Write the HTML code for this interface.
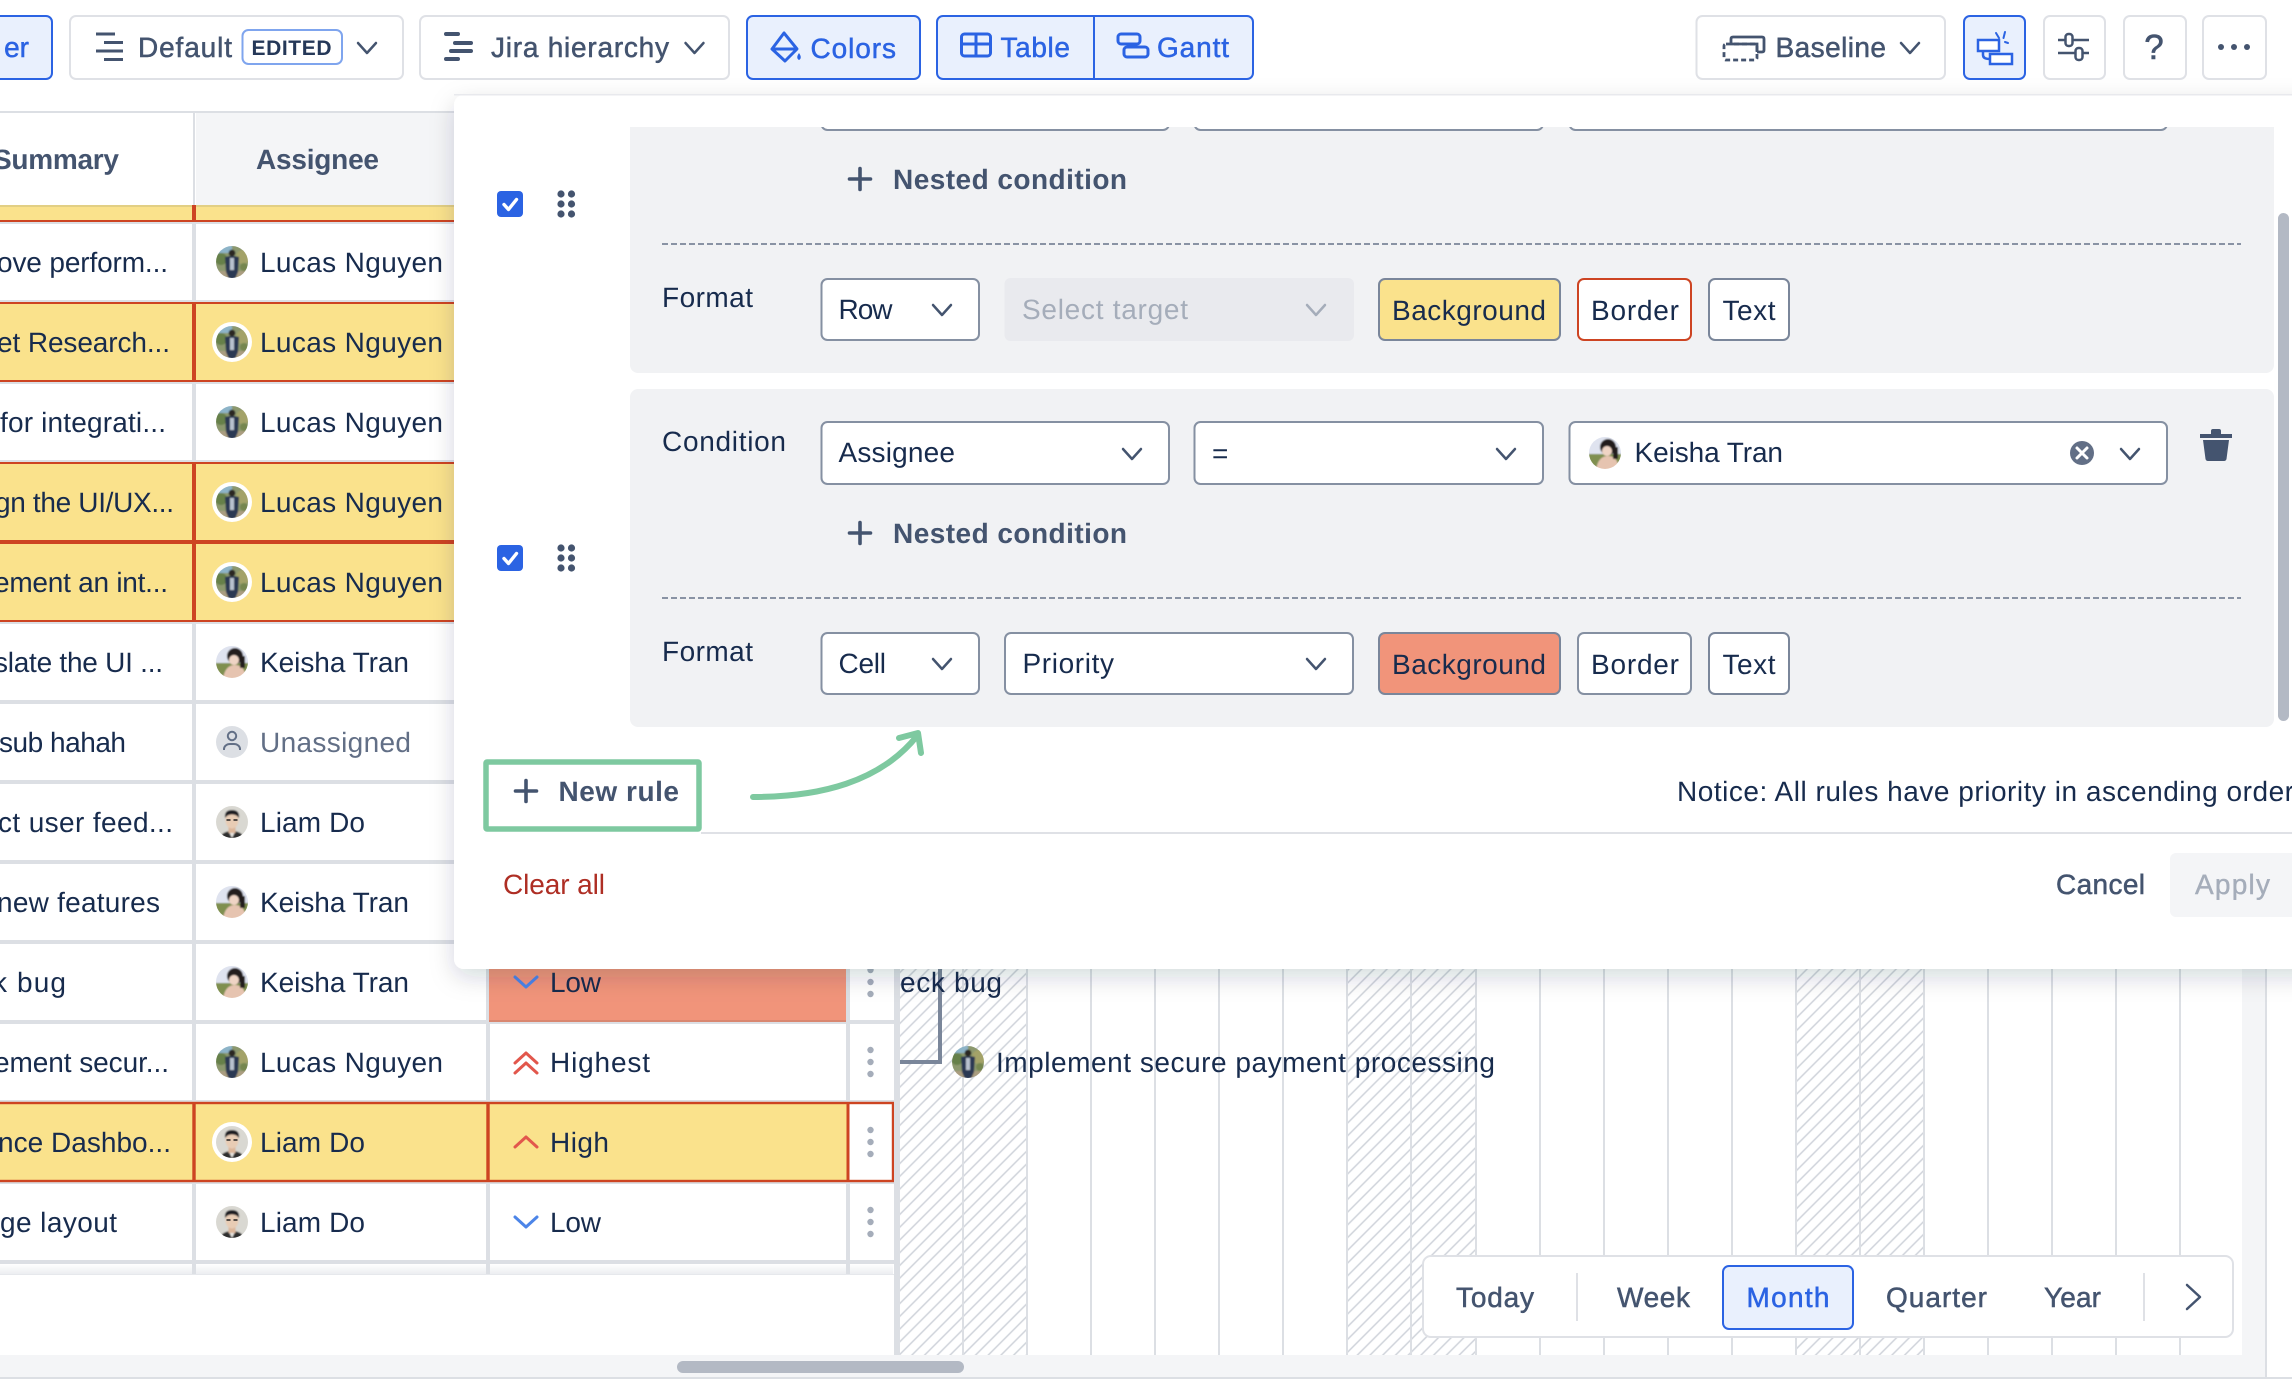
<!DOCTYPE html>
<html><head><meta charset="utf-8"><title>Gantt colors</title>
<style>
html,body{margin:0;padding:0;background:#fff;width:2292px;height:1379px;overflow:hidden}
svg{display:block;position:absolute;left:0;top:0}
text{font-family:"Liberation Sans",sans-serif;font-size:28px;fill:#172b4d;text-rendering:geometricPrecision;white-space:pre}
.m{fill:#44546f;stroke:#44546f;stroke-width:.5}
.h{fill:#44546f;font-weight:700}
.b{fill:#2b63e3;stroke:#2b63e3;stroke-width:.5}
.btn{fill:#fff;stroke:#dfe1e6;stroke-width:2}
.act{fill:#e9f0fd;stroke:#2b63e3;stroke-width:2}
.inp{fill:#fff;stroke:#8590a2;stroke-width:2}
.chev{fill:none;stroke:#44546f;stroke-width:2.5;stroke-linecap:round;stroke-linejoin:round}
</style></head><body>
<svg width="2292" height="1379" viewBox="0 0 2292 1379" xmlns="http://www.w3.org/2000/svg">
<defs>
<pattern id="hatch" width="9" height="9" patternUnits="userSpaceOnUse" patternTransform="rotate(45)"><line x1="1" y1="0" x2="1" y2="9" stroke="#cfd3da" stroke-width="1.500"/></pattern>
<filter id="sh" x="-5%" y="-10%" width="110%" height="125%"><feDropShadow dx="0" dy="8" stdDeviation="12" flood-color="#091e42" flood-opacity=".17"/></filter>
<filter id="soft" x="-10%" y="-10%" width="120%" height="120%"><feGaussianBlur stdDeviation=".8"/></filter>
<linearGradient id="fade" x1="0" y1="0" x2="0" y2="1"><stop offset="0" stop-color="#fff"/><stop offset="1" stop-color="#eceef1"/></linearGradient>
<clipPath id="av"><circle r="16"/></clipPath>
<clipPath id="scroll"><rect x="454" y="127" width="1822" height="620"/></clipPath>
<g id="lucas"><g clip-path="url(#av)"><g filter="url(#soft)"><rect x="-17" y="-17" width="34" height="34" fill="#8c986e"/><rect x="-17" y="-17" width="17" height="8" fill="#8db4c8"/><circle cx="-11" cy="-3" r="6" fill="#66804a"/><circle cx="11" cy="-5" r="7" fill="#a3a268"/><circle cx="12" cy="5" r="4" fill="#74864f"/><rect x="-17" y="9" width="34" height="8" fill="#aa9d80"/><path d="M-7 -5 Q0 -7 7 -5 L6 10 L3 17 H-3 L-6 10Z" fill="#2a3852"/><rect x="-2" y="-4" width="4" height="12" fill="#b9c2cf"/><circle cy="-9" r="3.4" fill="#2b2622"/></g></g></g>
<g id="keisha"><g clip-path="url(#av)"><g filter="url(#soft)"><rect x="-17" y="-17" width="34" height="34" fill="#dfe3ef"/><rect x="-17" y="1" width="34" height="16" fill="#7f8f50"/><path d="M-9 17 Q-7 3 3 3 Q13 3 14 17Z" fill="#e6c4b0"/><circle cx="3" cy="-6" r="8" fill="#231d1f"/><ellipse cx="2" cy="-2" rx="5" ry="5" fill="#efd4c4"/><rect x="8" y="-6" width="5" height="12" fill="#231d1f"/></g></g></g>
<g id="liam"><g clip-path="url(#av)"><g filter="url(#soft)"><rect x="-17" y="-17" width="34" height="34" fill="#d9d8d2"/><path d="M-13 17 Q-10 9 0 9 Q10 9 13 17Z" fill="#2e2d2e"/><path d="M-3 10L0 16L3 10Z" fill="#e8e6e2"/><rect x="-3.500" y="5" width="7" height="6" fill="#dcb69a"/><ellipse cy="-2" rx="6.500" ry="8.500" fill="#e8ccb4"/><path d="M-7 -4 Q-8 -12 0 -12 Q8 -12 7 -4 Q4 -8 0 -7.500 Q-4 -8 -7 -4Z" fill="#1f1e20"/></g><path d="M-5.500 -2h4M1.500 -2h4" stroke="#222" stroke-width="1.500"/></g></g>
<g id="none"><circle r="16" fill="#dcdfe4"/><circle cy="-6" r="4.2" fill="none" stroke="#626f86" stroke-width="2"/><path d="M-8 8 v-1 a6 5 0 0 1 6 -5 h4 a6 5 0 0 1 6 5 v1" fill="none" stroke="#626f86" stroke-width="2"/></g>
<g id="ring"><circle r="20" fill="#fff"/></g>
<g id="hl"><rect x="0" y="0" width="454" height="80" fill="#fae28c"/><rect x="0" y="0" width="454" height="2" fill="#cd4422"/><rect x="0" y="78" width="454" height="2" fill="#cd4422"/><rect x="192" y="0" width="4" height="80" fill="#cd4422"/></g>
<g id="keb" fill="#a5adba"><circle cy="-12" r="3.2"/><circle r="3.2"/><circle cy="12" r="3.2"/></g>
<g id="drag" fill="#44546f"><circle cx="561" cy="-10" r="3.6"/><circle cx="571.500" cy="-10" r="3.6"/><circle cx="561" r="3.6"/><circle cx="571.500" r="3.6"/><circle cx="561" cy="10" r="3.6"/><circle cx="571.500" cy="10" r="3.6"/></g>
<g id="cb"><rect x="497" y="-13" width="26" height="26" rx="4" fill="#2b63e3"/><path d="M504 0.5 l4.5 5 l8 -10" fill="none" stroke="#fff" stroke-width="3.4" stroke-linecap="round" stroke-linejoin="round"/></g>
<path id="plus" d="M0 -10.500V10.500M-10.500 0H10.500" stroke="#44546f" stroke-width="3.6" stroke-linecap="round" fill="none"/>
<path id="low" d="M-11 -5 L0 5 L11 -5" fill="none" stroke="#4c85e8" stroke-width="3" stroke-linecap="round" stroke-linejoin="round"/>
<path id="dn" d="M-9 -5 L0 5 L9 -5" class="chev"/>
</defs>

<!-- table base -->
<rect x="0" y="111" width="454" height="2" fill="#dcdfe4"/>
<rect x="196" y="113" width="258" height="92" fill="#f4f5f7"/>
<rect x="193" y="113" width="2" height="92" fill="#dcdfe4"/>
<rect x="0" y="205" width="454" height="17" fill="#fae28c"/>
<rect x="0" y="205" width="454" height="2" fill="#e2cf84"/>
<rect x="0" y="220" width="454" height="2" fill="#cd4422"/>
<rect x="192" y="205" width="4" height="17" fill="#cd4422"/>
<rect x="0" y="222" width="454" height="2" fill="#dcdfe4"/>

<g fill="#dcdfe4">
<rect x="0" y="300" width="894" height="4"/><rect x="0" y="380" width="894" height="4"/><rect x="0" y="460" width="894" height="4"/><rect x="0" y="540" width="894" height="4"/><rect x="0" y="620" width="894" height="4"/><rect x="0" y="700" width="894" height="4"/><rect x="0" y="780" width="894" height="4"/><rect x="0" y="860" width="894" height="4"/><rect x="0" y="940" width="894" height="4"/><rect x="0" y="1020" width="894" height="4"/><rect x="0" y="1100" width="894" height="4"/><rect x="0" y="1180" width="894" height="4"/><rect x="0" y="1260" width="894" height="4"/>
<rect x="192" y="222" width="4" height="1052"/><rect x="486" y="222" width="4" height="1052"/><rect x="846" y="222" width="4" height="1052"/>
</g>
<rect x="0" y="1264" width="893" height="10" fill="url(#fade)"/>
<g fill="#dcdfe4"><rect x="192" y="1264" width="4" height="10"/><rect x="486" y="1264" width="4" height="10"/><rect x="846" y="1264" width="4" height="10"/></g>
<rect x="0" y="1274" width="894" height="1" fill="#e6e8ec"/>

<use href="#hl" y="302"/><use href="#hl" y="462"/><use href="#hl" y="542"/>

<!-- orange cell -->
<rect x="489" y="942" width="357" height="80" fill="#f1947a"/>
<rect x="489" y="1020" width="357" height="2" fill="#d98770"/>

<!-- highlighted row 11 -->
<rect x="0" y="1102" width="848" height="80" fill="#fae28c"/>
<rect x="848" y="1102" width="46" height="80" fill="#fff"/>
<g fill="none" stroke="#cd4422">
<rect x="-4" y="1103" width="897" height="78" stroke-width="2.4"/>
<path d="M194 1102V1182M488 1102V1182" stroke-width="3.4"/>
<path d="M848 1102V1182" stroke-width="3"/>
</g>

<!-- gantt -->
<rect x="894" y="113" width="6" height="1242" fill="#dcdfe4"/>
<rect x="900" y="900" width="127" height="455" fill="url(#hatch)"/>
<rect x="1347" y="900" width="129" height="455" fill="url(#hatch)"/>
<rect x="1795" y="900" width="128" height="455" fill="url(#hatch)"/>
<g fill="#dcdfe4">
<rect x="962" y="900" width="2" height="455"/><rect x="1026" y="900" width="2" height="455"/><rect x="1090" y="900" width="2" height="455"/><rect x="1154" y="900" width="2" height="455"/><rect x="1218" y="900" width="2" height="455"/><rect x="1282" y="900" width="2" height="455"/><rect x="1346" y="900" width="2" height="455"/><rect x="1410" y="900" width="2" height="455"/><rect x="1475" y="900" width="2" height="455"/><rect x="1539" y="900" width="2" height="455"/><rect x="1603" y="900" width="2" height="455"/><rect x="1667" y="900" width="2" height="455"/><rect x="1731" y="900" width="2" height="455"/><rect x="1795" y="900" width="2" height="455"/><rect x="1859" y="900" width="2" height="455"/><rect x="1923" y="900" width="2" height="455"/><rect x="1987" y="900" width="2" height="455"/><rect x="2051" y="900" width="2" height="455"/><rect x="2115" y="900" width="2" height="455"/><rect x="2179" y="900" width="2" height="455"/>
</g>
<rect x="2242" y="900" width="23" height="455" fill="#f4f5f7"/>
<rect x="2265" y="900" width="2" height="479" fill="#dcdfe4"/>
<path d="M900 1062H940V900" fill="none" stroke="#7a869a" stroke-width="4"/>
<use href="#lucas" x="968" y="1062"/>
<text x="900" y="992" textLength="102">eck bug</text>
<text x="996" y="1072" textLength="499">Implement secure payment processing</text>

<!-- bottom scroll -->
<rect x="0" y="1355" width="2265" height="22" fill="#f4f5f7"/>
<rect x="0" y="1377" width="2292" height="2" fill="#dcdfe4"/>
<rect x="677" y="1361" width="287" height="12" rx="6" fill="#b3b9c4"/>

<!-- date control -->
<rect x="1423" y="1256" width="810" height="81" rx="8" fill="#fff" stroke="#dfe1e6" stroke-width="2"/>
<rect x="1576" y="1273" width="2" height="48" fill="#dfe1e6"/>
<rect x="2143" y="1273" width="2" height="48" fill="#dfe1e6"/>
<rect x="1723" y="1266" width="130" height="63" rx="6" class="act"/>
<text x="1456" y="1307" textLength="78" class="m">Today</text>
<text x="1617" y="1307" textLength="73" class="m">Week</text>
<text x="1746.500" y="1307" textLength="83" class="b">Month</text>
<text x="1886" y="1307" textLength="101" class="m">Quarter</text>
<text x="2044" y="1307" textLength="57" class="m">Year</text>
<path d="M2187 1285L2200 1297L2187 1309" class="chev"/>

<!-- table text -->
<text x="-7" y="169" textLength="126" class="h">Summary</text>
<text x="256" y="169" textLength="123" class="h">Assignee</text>

<text x="-3" y="272" textLength="171">ove perform...</text>
<text x="-3" y="352" textLength="173">et Research...</text>
<text x="0" y="432" textLength="166">for integrati...</text>
<text x="-5" y="512" textLength="179">gn the UI/UX...</text>
<text x="-6" y="592" textLength="174">ement an int...</text>
<text x="-6" y="672" textLength="169">slate the UI ...</text>
<text x="-1" y="752" textLength="127">sub hahah</text>
<text x="-2" y="832" textLength="175">ct user feed...</text>
<text x="-3" y="912" textLength="163">new features</text>
<text x="-7" y="992" textLength="73">k bug</text>
<text x="-6" y="1072" textLength="175">ement secur...</text>
<text x="-2" y="1152" textLength="173">nce Dashbo...</text>
<text x="0" y="1232" textLength="117">ge layout</text>

<use href="#ring" x="232" y="342"/><use href="#ring" x="232" y="502"/><use href="#ring" x="232" y="582"/><use href="#ring" x="232" y="1142"/>
<use href="#lucas" x="232" y="262"/><use href="#lucas" x="232" y="342"/><use href="#lucas" x="232" y="422"/><use href="#lucas" x="232" y="502"/><use href="#lucas" x="232" y="582"/>
<use href="#keisha" x="232" y="662"/><use href="#none" x="232" y="742"/><use href="#liam" x="232" y="822"/><use href="#keisha" x="232" y="902"/><use href="#keisha" x="232" y="982"/><use href="#lucas" x="232" y="1062"/><use href="#liam" x="232" y="1142"/><use href="#liam" x="232" y="1222"/>

<text x="260" y="272" textLength="183">Lucas Nguyen</text>
<text x="260" y="352" textLength="183">Lucas Nguyen</text>
<text x="260" y="432" textLength="183">Lucas Nguyen</text>
<text x="260" y="512" textLength="183">Lucas Nguyen</text>
<text x="260" y="592" textLength="183">Lucas Nguyen</text>
<text x="260" y="672" textLength="149">Keisha Tran</text>
<text x="260" y="752" textLength="151" style="fill:#626f86">Unassigned</text>
<text x="260" y="832" textLength="105">Liam Do</text>
<text x="260" y="912" textLength="149">Keisha Tran</text>
<text x="260" y="992" textLength="149">Keisha Tran</text>
<text x="260" y="1072" textLength="183">Lucas Nguyen</text>
<text x="260" y="1152" textLength="105">Liam Do</text>
<text x="260" y="1232" textLength="105">Liam Do</text>

<!-- priority -->
<use href="#low" x="526" y="982"/>
<text x="550" y="992" textLength="51">Low</text>
<path d="M515 1063L526 1053L537 1063M515 1073L526 1063L537 1073" fill="none" stroke="#e2574c" stroke-width="3" stroke-linecap="round" stroke-linejoin="round"/>
<text x="550" y="1072" textLength="100">Highest</text>
<path d="M515 1147L526 1137L537 1147" fill="none" stroke="#e2574c" stroke-width="3" stroke-linecap="round" stroke-linejoin="round"/>
<text x="550" y="1152" textLength="59">High</text>
<use href="#low" x="526" y="1222"/>
<text x="550" y="1232" textLength="51">Low</text>
<use href="#keb" x="870.5" y="982"/><use href="#keb" x="870.5" y="1062"/><use href="#keb" x="870.5" y="1142"/><use href="#keb" x="870.5" y="1222"/>

<!-- panel -->
<rect x="454" y="95" width="2000" height="874" rx="10" fill="#fff" filter="url(#sh)"/>
<rect x="454" y="94" width="1838" height="1.5" fill="#e8e9ed"/>

<g clip-path="url(#scroll)">
<rect x="630" y="35" width="1644" height="338" rx="8" fill="#f1f2f4"/>
<rect x="630" y="389" width="1644" height="338" rx="8" fill="#f1f2f4"/>

<!-- rule 1 -->
<rect x="821.500" y="68" width="347.500" height="62" rx="6" class="inp"/>
<rect x="1194.500" y="68" width="348.500" height="62" rx="6" class="inp"/>
<rect x="1569.500" y="68" width="597.500" height="62" rx="6" class="inp"/>
<use href="#plus" x="860" y="179"/>
<text x="893" y="189" textLength="234" class="h">Nested condition</text>
<path d="M662 244H2241" stroke="#8993a4" stroke-width="2" stroke-dasharray="6 3"/>
<text x="662" y="307" textLength="91">Format</text>
<rect x="821.500" y="279" width="157.500" height="61" rx="6" class="inp"/>
<text x="838.500" y="319" textLength="54">Row</text>
<use href="#dn" x="942" y="310"/>
<rect x="1004.500" y="278" width="349.500" height="63" rx="6" fill="#e9eaee"/>
<text x="1022" y="319" textLength="166" style="fill:#a5adba">Select target</text>
<path d="M1307 305L1316 315L1325 305" fill="none" stroke="#a5adba" stroke-width="2.5" stroke-linecap="round" stroke-linejoin="round"/>
<rect x="1379" y="279" width="181" height="61" rx="6" fill="#fae28c" stroke="#7a869a" stroke-width="2"/>
<text x="1392" y="320" textLength="154">Background</text>
<rect x="1578" y="279" width="113" height="61" rx="6" fill="#fff" stroke="#cd4422" stroke-width="2"/>
<text x="1591" y="320" textLength="88">Border</text>
<rect x="1709" y="279" width="80" height="61" rx="6" fill="#fff" stroke="#7a869a" stroke-width="2"/>
<text x="1722.500" y="320" textLength="53">Text</text>

<!-- rule 2 -->
<text x="662" y="451" textLength="124">Condition</text>
<rect x="821.500" y="422" width="347.500" height="62" rx="6" class="inp"/>
<text x="838.500" y="462" textLength="116.500">Assignee</text>
<use href="#dn" x="1132" y="454"/>
<rect x="1194.500" y="422" width="348.500" height="62" rx="6" class="inp"/>
<text x="1212" y="463">=</text>
<use href="#dn" x="1506" y="454"/>
<rect x="1569.500" y="422" width="597.500" height="62" rx="6" class="inp"/>
<use href="#keisha" x="1605" y="453"/>
<text x="1634.500" y="462" textLength="148.500">Keisha Tran</text>
<circle cx="2082" cy="453" r="12" fill="#626f86"/>
<path d="M2077 448l10 10M2087 448l-10 10" stroke="#fff" stroke-width="3" stroke-linecap="round"/>
<use href="#dn" x="2130" y="454"/>
<path d="M2200 434H2211V431Q2211 429 2213 429H2219Q2221 429 2221 431V434H2232V438H2200ZM2203 440H2229L2226.500 459Q2226 461 2224 461H2208Q2206 461 2205.500 459Z" fill="#44546f"/>
<use href="#plus" x="860" y="533"/>
<text x="893" y="543" textLength="234" class="h">Nested condition</text>
<path d="M662 598H2241" stroke="#8993a4" stroke-width="2" stroke-dasharray="6 3"/>
<text x="662" y="661" textLength="91">Format</text>
<rect x="821.500" y="633" width="157.500" height="61" rx="6" class="inp"/>
<text x="838.500" y="673" textLength="47.500">Cell</text>
<use href="#dn" x="942" y="664"/>
<rect x="1005" y="633" width="348" height="61" rx="6" class="inp"/>
<text x="1022.500" y="673" textLength="91.500">Priority</text>
<use href="#dn" x="1316" y="664"/>
<rect x="1379" y="633" width="181" height="61" rx="6" fill="#f1947a" stroke="#7a869a" stroke-width="2"/>
<text x="1392" y="674" textLength="154">Background</text>
<rect x="1578" y="633" width="113" height="61" rx="6" fill="#fff" stroke="#8590a2" stroke-width="2"/>
<text x="1591" y="674" textLength="88">Border</text>
<rect x="1709" y="633" width="80" height="61" rx="6" fill="#fff" stroke="#7a869a" stroke-width="2"/>
<text x="1722.500" y="674" textLength="53">Text</text>
</g>

<use href="#cb" y="204"/><use href="#drag" y="204"/>
<use href="#cb" y="558"/><use href="#drag" y="558"/>

<rect x="2278" y="213" width="11" height="508" rx="5.500" fill="#b3b9c4"/>

<!-- new rule -->
<rect x="486" y="762" width="213" height="67" rx="1" fill="#fff" stroke="#7ec9a0" stroke-width="5.500"/>
<use href="#plus" x="526" y="791"/>
<text x="558.500" y="801" textLength="120.500" class="h">New rule</text>
<path d="M753 797C820 797 880 782 917 736M899 738L918 733L921 753" fill="none" stroke="#7ec9a0" stroke-width="6" stroke-linecap="round" stroke-linejoin="round"/>
<rect x="701" y="832" width="1591" height="2" fill="#dfe1e6"/>
<text x="1677" y="801" textLength="617">Notice: All rules have priority in ascending order</text>
<text x="503" y="894" textLength="102" style="fill:#ae2e24">Clear all</text>
<text x="2056" y="894" textLength="89" class="m">Cancel</text>
<rect x="2170" y="853" width="140" height="64" rx="6" fill="#f4f5f7"/>
<text x="2195" y="894" textLength="75" style="fill:#a5adba;stroke:#a5adba;stroke-width:.4">Apply</text>

<!-- toolbar -->
<rect x="-20" y="16" width="72" height="63" rx="6" class="act"/>
<text x="29" y="57" text-anchor="end" class="b">er</text>

<rect x="70" y="16" width="333" height="63" rx="6" class="btn"/>
<path d="M96 34H115M104 42.500H123M96 51H123M104 59.500H123" stroke="#44546f" stroke-width="3" fill="none"/>
<text x="138" y="57" textLength="94" class="m">Default</text>
<rect x="242.500" y="30" width="99.500" height="34" rx="6" fill="#fff" stroke="#7fa5ee" stroke-width="2"/>
<text x="251.500" y="55" textLength="80" style="font-size:21px;font-weight:700;fill:#253858">EDITED</text>
<use href="#dn" x="367" y="48"/>

<rect x="420" y="16" width="309" height="63" rx="6" class="btn"/>
<path d="M446 34H458M455 43H471M451 51H471M446 59H458" stroke="#44546f" stroke-width="4" stroke-linecap="round" fill="none"/>
<text x="491" y="57" textLength="178" class="m">Jira hierarchy</text>
<use href="#dn" x="694.500" y="48"/>

<rect x="747" y="16" width="173" height="63" rx="6" class="act"/>
<path d="M784 33L772 49L785 61L797 49ZM772 49H797" fill="none" stroke="#2b63e3" stroke-width="3" stroke-linejoin="round"/>
<path d="M799 53q-3.500 5 0 7q3.500 -2 0 -7Z" fill="#2b63e3"/>
<text x="810.500" y="58" textLength="85.500" class="b">Colors</text>

<rect x="937" y="16" width="316" height="63" rx="6" class="act"/>
<rect x="1093" y="16" width="2" height="63" fill="#2b63e3"/>
<rect x="961.500" y="34" width="29" height="22" rx="3" fill="none" stroke="#2b63e3" stroke-width="3"/>
<path d="M976 34V56M961.500 44H990.500" stroke="#2b63e3" stroke-width="3"/>
<text x="1000.500" y="57" textLength="69.500" class="b">Table</text>
<rect x="1118" y="34" width="22" height="10" rx="3" fill="none" stroke="#2b63e3" stroke-width="3"/>
<rect x="1124" y="47" width="24" height="10" rx="3" fill="none" stroke="#2b63e3" stroke-width="3"/>
<text x="1157" y="57" textLength="72" class="b">Gantt</text>

<rect x="1696.500" y="16" width="248.500" height="63" rx="6" class="btn"/>
<path d="M1731 44V39Q1731 37 1733 37H1762Q1764 37 1764 39V50Q1764 52 1762 52H1757" fill="none" stroke="#44546f" stroke-width="2.800"/>
<path d="M1731 44H1757V52" fill="none" stroke="#44546f" stroke-width="2.800"/>
<rect x="1724" y="44" width="33" height="16" rx="2" fill="none" stroke="#44546f" stroke-width="2.800" stroke-dasharray="5 3"/>
<text x="1775.500" y="57" textLength="110.500" class="m">Baseline</text>
<use href="#dn" x="1910" y="48"/>

<rect x="1964" y="16" width="61" height="63" rx="6" class="act"/>
<rect x="1978" y="40" width="21" height="11" fill="#fff" stroke="#2b63e3" stroke-width="2.500"/>
<rect x="1990" y="54" width="22" height="10" fill="#fff" stroke="#2b63e3" stroke-width="2.500"/>
<path d="M1983 51V55Q1983 59 1990 59" fill="none" stroke="#2b63e3" stroke-width="2.500"/>
<path d="M1996 33L1999 38M2005 32L2003.500 38M2008 43L2005 42" stroke="#2b63e3" stroke-width="2" stroke-linecap="round"/>

<rect x="2044" y="16" width="61" height="63" rx="6" class="btn"/>
<path d="M2058 40H2065M2073 40H2089M2058 53H2075M2083 53H2089" stroke="#44546f" stroke-width="2.500"/>
<rect x="2065.500" y="34" width="7" height="12" rx="3" fill="#fff" stroke="#44546f" stroke-width="2.500"/>
<rect x="2075.500" y="48" width="7" height="12" rx="3" fill="#fff" stroke="#44546f" stroke-width="2.500"/>

<rect x="2124" y="16" width="62" height="63" rx="6" class="btn"/>
<text x="2154" y="59" text-anchor="middle" style="font-size:35px;fill:#44546f;stroke:#44546f;stroke-width:.6">?</text>

<rect x="2203" y="16" width="63" height="63" rx="6" class="btn"/>
<g fill="#44546f"><circle cx="2221" cy="47" r="3"/><circle cx="2234" cy="47" r="3"/><circle cx="2247" cy="47" r="3"/></g>
</svg>
</body></html>
